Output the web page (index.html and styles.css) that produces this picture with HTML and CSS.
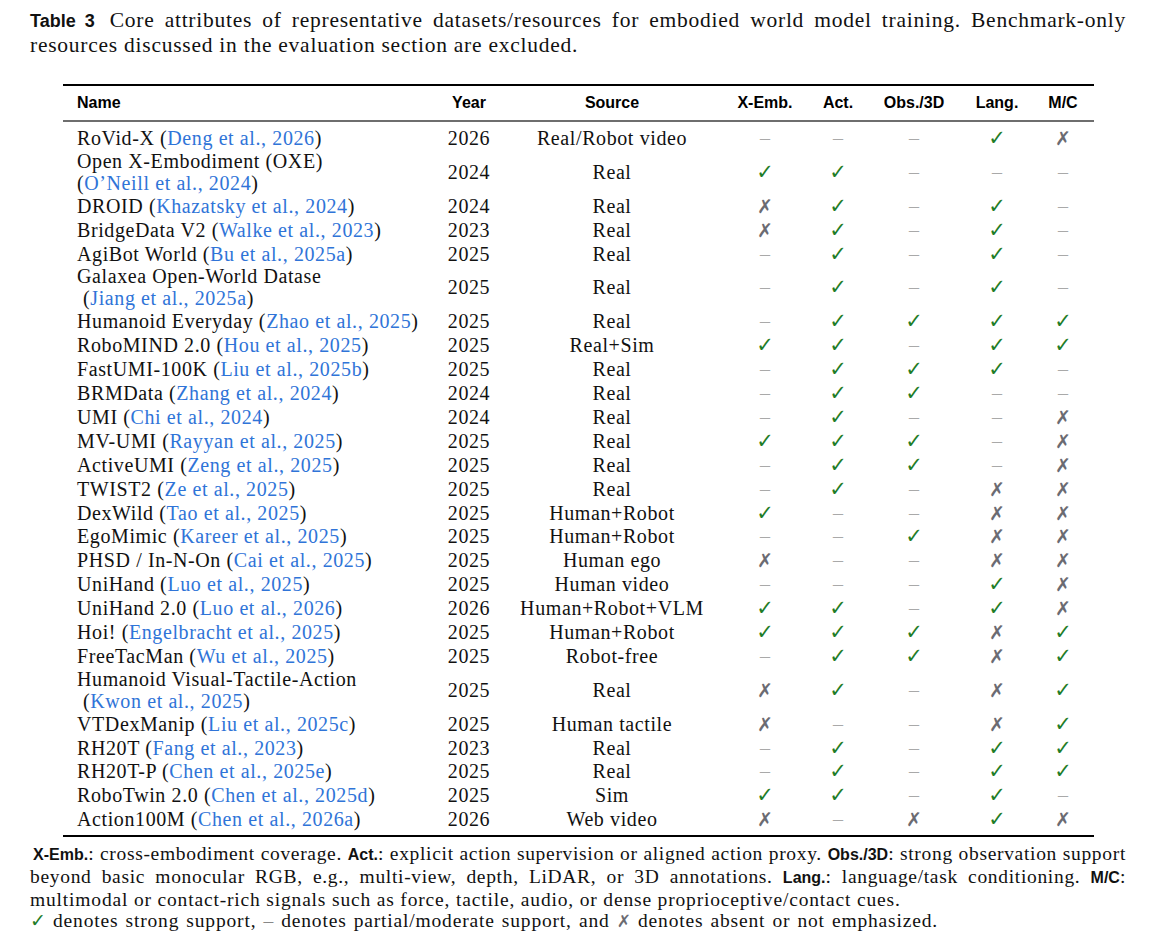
FILE: index.html
```html
<!DOCTYPE html>
<html lang="en">
<head>
<meta charset="utf-8">
<title>Table 3</title>
<link rel="stylesheet" href="styles.css">
</head>
<body>
<div class="page">
  <div class="caption">
    <div class="cap-line justified"><span class="tag">Table 3</span>Core attributes of representative datasets/resources for embodied world model training. Benchmark-only</div>
    <div class="cap-line">resources discussed in the evaluation section are excluded.</div>
  </div>

  <table class="data">
    <colgroup>
      <col class="c-name"><col class="c-year"><col class="c-src"><col class="c-xe"><col class="c-act"><col class="c-obs"><col class="c-lang"><col class="c-mc">
    </colgroup>
    <thead>
      <tr>
        <th class="name">Name</th><th>Year</th><th>Source</th><th>X-Emb.</th><th>Act.</th><th>Obs./3D</th><th>Lang.</th><th class="last">M/C</th>
      </tr>
    </thead>
    <tbody>
      <tr><td class="name">RoVid-X (<span class="cite">Deng et al., 2026</span>)</td><td>2026</td><td>Real/Robot video</td><td class="d">–</td><td class="d">–</td><td class="d">–</td><td class="y">✓</td><td class="n last">✗</td></tr>
      <tr><td class="name"><div class="two">Open X-Embodiment (OXE)<br>(<span class="cite">O’Neill et al., 2024</span>)</div></td><td>2024</td><td>Real</td><td class="y">✓</td><td class="y">✓</td><td class="d">–</td><td class="d">–</td><td class="d last">–</td></tr>
      <tr><td class="name">DROID (<span class="cite">Khazatsky et al., 2024</span>)</td><td>2024</td><td>Real</td><td class="n">✗</td><td class="y">✓</td><td class="d">–</td><td class="y">✓</td><td class="d last">–</td></tr>
      <tr><td class="name">BridgeData V2 (<span class="cite">Walke et al., 2023</span>)</td><td>2023</td><td>Real</td><td class="n">✗</td><td class="y">✓</td><td class="d">–</td><td class="y">✓</td><td class="d last">–</td></tr>
      <tr><td class="name">AgiBot World (<span class="cite">Bu et al., 2025a</span>)</td><td>2025</td><td>Real</td><td class="d">–</td><td class="y">✓</td><td class="d">–</td><td class="y">✓</td><td class="d last">–</td></tr>
      <tr><td class="name"><div class="two">Galaxea Open-World Datase<br><span class="indent">(<span class="cite">Jiang et al., 2025a</span>)</span></div></td><td>2025</td><td>Real</td><td class="d">–</td><td class="y">✓</td><td class="d">–</td><td class="y">✓</td><td class="d last">–</td></tr>
      <tr><td class="name">Humanoid Everyday (<span class="cite">Zhao et al., 2025</span>)</td><td>2025</td><td>Real</td><td class="d">–</td><td class="y">✓</td><td class="y">✓</td><td class="y">✓</td><td class="y last">✓</td></tr>
      <tr><td class="name">RoboMIND 2.0 (<span class="cite">Hou et al., 2025</span>)</td><td>2025</td><td>Real+Sim</td><td class="y">✓</td><td class="y">✓</td><td class="d">–</td><td class="y">✓</td><td class="y last">✓</td></tr>
      <tr><td class="name">FastUMI-100K (<span class="cite">Liu et al., 2025b</span>)</td><td>2025</td><td>Real</td><td class="d">–</td><td class="y">✓</td><td class="y">✓</td><td class="y">✓</td><td class="d last">–</td></tr>
      <tr><td class="name">BRMData (<span class="cite">Zhang et al., 2024</span>)</td><td>2024</td><td>Real</td><td class="d">–</td><td class="y">✓</td><td class="y">✓</td><td class="d">–</td><td class="d last">–</td></tr>
      <tr><td class="name">UMI (<span class="cite">Chi et al., 2024</span>)</td><td>2024</td><td>Real</td><td class="d">–</td><td class="y">✓</td><td class="d">–</td><td class="d">–</td><td class="n last">✗</td></tr>
      <tr><td class="name">MV-UMI (<span class="cite">Rayyan et al., 2025</span>)</td><td>2025</td><td>Real</td><td class="y">✓</td><td class="y">✓</td><td class="y">✓</td><td class="d">–</td><td class="n last">✗</td></tr>
      <tr><td class="name">ActiveUMI (<span class="cite">Zeng et al., 2025</span>)</td><td>2025</td><td>Real</td><td class="d">–</td><td class="y">✓</td><td class="y">✓</td><td class="d">–</td><td class="n last">✗</td></tr>
      <tr><td class="name">TWIST2 (<span class="cite">Ze et al., 2025</span>)</td><td>2025</td><td>Real</td><td class="d">–</td><td class="y">✓</td><td class="d">–</td><td class="n">✗</td><td class="n last">✗</td></tr>
      <tr><td class="name">DexWild (<span class="cite">Tao et al., 2025</span>)</td><td>2025</td><td>Human+Robot</td><td class="y">✓</td><td class="d">–</td><td class="d">–</td><td class="n">✗</td><td class="n last">✗</td></tr>
      <tr><td class="name">EgoMimic (<span class="cite">Kareer et al., 2025</span>)</td><td>2025</td><td>Human+Robot</td><td class="d">–</td><td class="d">–</td><td class="y">✓</td><td class="n">✗</td><td class="n last">✗</td></tr>
      <tr><td class="name">PHSD / In-N-On (<span class="cite">Cai et al., 2025</span>)</td><td>2025</td><td>Human ego</td><td class="n">✗</td><td class="d">–</td><td class="d">–</td><td class="n">✗</td><td class="n last">✗</td></tr>
      <tr><td class="name">UniHand (<span class="cite">Luo et al., 2025</span>)</td><td>2025</td><td>Human video</td><td class="d">–</td><td class="d">–</td><td class="d">–</td><td class="y">✓</td><td class="n last">✗</td></tr>
      <tr><td class="name">UniHand 2.0 (<span class="cite">Luo et al., 2026</span>)</td><td>2026</td><td>Human+Robot+VLM</td><td class="y">✓</td><td class="y">✓</td><td class="d">–</td><td class="y">✓</td><td class="n last">✗</td></tr>
      <tr><td class="name">Hoi! (<span class="cite">Engelbracht et al., 2025</span>)</td><td>2025</td><td>Human+Robot</td><td class="y">✓</td><td class="y">✓</td><td class="y">✓</td><td class="n">✗</td><td class="y last">✓</td></tr>
      <tr><td class="name">FreeTacMan (<span class="cite">Wu et al., 2025</span>)</td><td>2025</td><td>Robot-free</td><td class="d">–</td><td class="y">✓</td><td class="y">✓</td><td class="n">✗</td><td class="y last">✓</td></tr>
      <tr><td class="name"><div class="two">Humanoid Visual-Tactile-Action<br><span class="indent">(<span class="cite">Kwon et al., 2025</span>)</span></div></td><td>2025</td><td>Real</td><td class="n">✗</td><td class="y">✓</td><td class="d">–</td><td class="n">✗</td><td class="y last">✓</td></tr>
      <tr><td class="name">VTDexManip (<span class="cite">Liu et al., 2025c</span>)</td><td>2025</td><td>Human tactile</td><td class="n">✗</td><td class="d">–</td><td class="d">–</td><td class="n">✗</td><td class="y last">✓</td></tr>
      <tr><td class="name">RH20T (<span class="cite">Fang et al., 2023</span>)</td><td>2023</td><td>Real</td><td class="d">–</td><td class="y">✓</td><td class="d">–</td><td class="y">✓</td><td class="y last">✓</td></tr>
      <tr><td class="name">RH20T-P (<span class="cite">Chen et al., 2025e</span>)</td><td>2025</td><td>Real</td><td class="d">–</td><td class="y">✓</td><td class="d">–</td><td class="y">✓</td><td class="y last">✓</td></tr>
      <tr><td class="name">RoboTwin 2.0 (<span class="cite">Chen et al., 2025d</span>)</td><td>2025</td><td>Sim</td><td class="y">✓</td><td class="y">✓</td><td class="d">–</td><td class="y">✓</td><td class="d last">–</td></tr>
      <tr><td class="name">Action100M (<span class="cite">Chen et al., 2026a</span>)</td><td>2026</td><td>Web video</td><td class="n">✗</td><td class="d">–</td><td class="n">✗</td><td class="y">✓</td><td class="n last">✗</td></tr>
    </tbody>
  </table>

  <div class="notes">
    <div class="note-line justified first"><b class="lbl">X-Emb.</b>: cross-embodiment coverage. <b class="lbl">Act.</b>: explicit action supervision or aligned action proxy. <b class="lbl">Obs./3D</b>: strong observation support</div>
    <div class="note-line justified">beyond basic monocular RGB, e.g., multi-view, depth, LiDAR, or 3D annotations. <b class="lbl">Lang.</b>: language/task conditioning. <b class="lbl">M/C</b>:</div>
    <div class="note-line plain">multimodal or contact-rich signals such as force, tactile, audio, or dense proprioceptive/contact cues.</div>
    <div class="note-line plain legend"><span class="ny">✓</span> denotes strong support, <span class="nd">–</span> denotes partial/moderate support, and <span class="nn">✗</span> denotes absent or not emphasized.</div>
  </div>
</div>
</body>
</html>
```

FILE: styles.css
```css
html, body {
  margin: 0;
  padding: 0;
  background: #ffffff;
}

body {
  width: 1165px;
  color: #111111;
  font-family: "Liberation Serif", "Times New Roman", serif;
}

.page {
  padding: 8px 39px 0 30px;
}

/* ---------- caption ---------- */
.caption {
  font-size: 21.5px;
  letter-spacing: 0.75px;
  line-height: 24px;
}

.cap-line {
  white-space: nowrap;
}

.justified {
  text-align: justify;
  text-align-last: justify;
}

.tag {
  font-family: "Liberation Sans", Arial, sans-serif;
  font-weight: bold;
  font-size: 18px;
  letter-spacing: 0;
  margin-right: 15px;
}

/* ---------- table ---------- */
.data {
  margin: 27px 0 0 33px;
  width: 1031px;
  border-collapse: collapse;
  table-layout: fixed;
}

.c-name { width: 377px; }
.c-year { width: 58px; }
.c-src  { width: 228px; }
.c-xe   { width: 78px; }
.c-act  { width: 68px; }
.c-obs  { width: 84px; }
.c-lang { width: 82px; }
.c-mc   { width: 56px; }

.data th {
  font-family: "Liberation Sans", Arial, sans-serif;
  font-weight: bold;
  font-size: 16px;
  letter-spacing: 0;
  color: #000;
  height: 34px;
  padding: 0;
  text-align: center;
  vertical-align: middle;
  border-top: 2.5px solid #000;
  border-bottom: 2px solid #6e6e6e;
  white-space: nowrap;
}

.data td {
  font-size: 20px;
  letter-spacing: 0.6px;
  line-height: 23.9px;
  padding: 0;
  text-align: center;
  vertical-align: middle;
  white-space: nowrap;
}

.data th.name,
.data td.name {
  text-align: left;
  padding-left: 14px;
}

.data th.last,
.data td.last {
  padding-right: 6px;
}

.data tbody tr:first-child td {
  padding-top: 5px;
}

.data tbody tr:last-child td {
  padding-bottom: 3px;
  border-bottom: 2.5px solid #000;
}

.two {
  line-height: 21.9px;
}

.indent {
  padding-left: 6px;
}

.cite {
  color: #2f74d8;
}

.data td.y {
  font-family: "DejaVu Sans", sans-serif;
  font-size: 21px;
  font-weight: bold;
  color: #1f7d28;
  letter-spacing: 0;
}

.data td.n {
  font-family: "DejaVu Sans", sans-serif;
  font-size: 19px;
  color: #6b6b72;
  letter-spacing: 0;
}

.data td.d {
  color: #a9a9a9;
  letter-spacing: 0;
}

/* ---------- notes ---------- */
.notes {
  margin-top: 6px;
  font-size: 19.5px;
  letter-spacing: 0.68px;
  line-height: 21.7px;
}

.note-line {
  white-space: nowrap;
}

.note-line.first {
  padding-left: 3px;
}

.note-line.plain {
  letter-spacing: 0.83px;
}

.note-line.legend {
  word-spacing: 1.4px;
}

.lbl {
  font-family: "Liberation Sans", Arial, sans-serif;
  font-weight: bold;
  font-size: 16px;
  letter-spacing: 0;
}

.ny {
  font-family: "DejaVu Sans", sans-serif;
  font-size: 19px;
  font-weight: bold;
  color: #1f7d28;
  letter-spacing: 0;
}

.nn {
  font-family: "DejaVu Sans", sans-serif;
  font-size: 17px;
  color: #6b6b72;
  letter-spacing: 0;
}

.nd {
  color: #888888;
}
```
